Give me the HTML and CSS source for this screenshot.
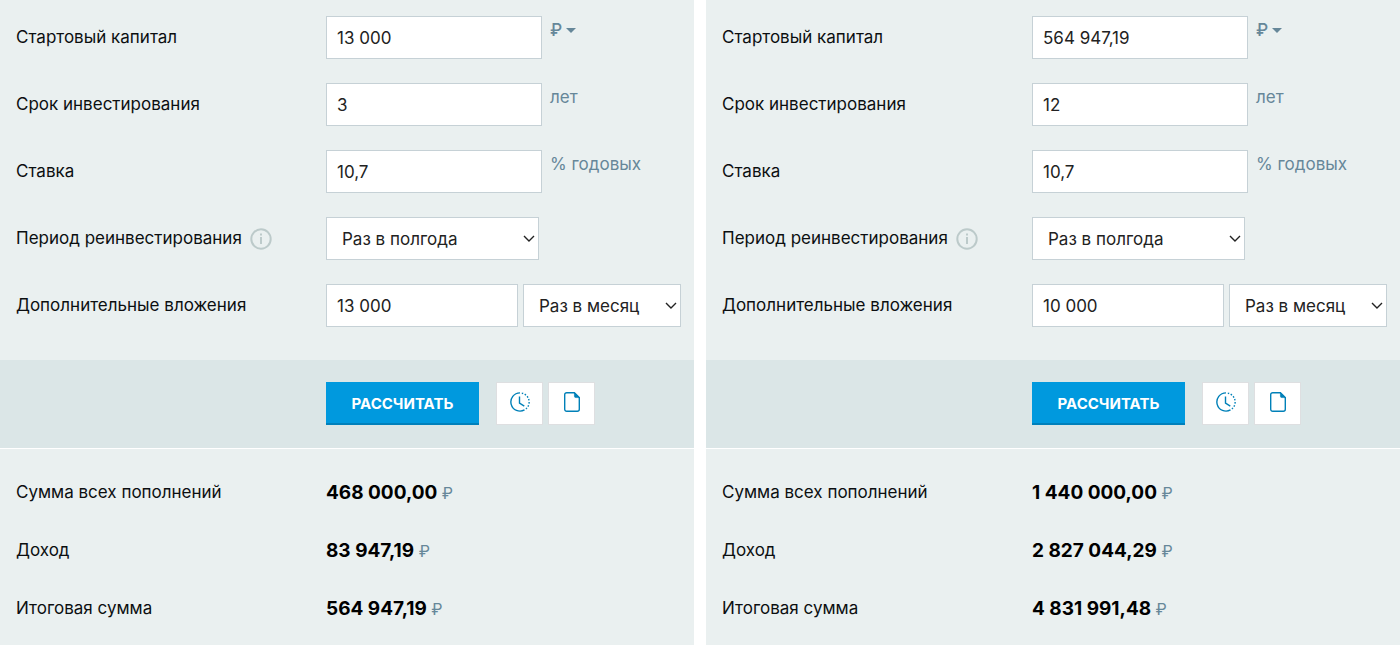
FILE: index.html
```html
<!DOCTYPE html>
<html lang="ru">
<head>
    <meta charset="UTF-8">
    <meta name="viewport" content="width=device-width, initial-scale=1.0">
    <title>Калькулятор инвестиций</title>
    <link rel="stylesheet" href="styles.css">
</head>
<body>
    <div class="container">
        <form class="calc">
            <div class="fields">
                <div class="row">
                    <label for="capital-1">Стартовый капитал</label>
                    <div class="control">
                        <input type="text" id="capital-1" value="13 000">
                        <button type="button" class="currency" aria-label="Валюта: ₽">₽<span class="caret"></span></button>
                    </div>
                </div>
                <div class="row">
                    <label for="term-1">Срок инвестирования</label>
                    <div class="control">
                        <input type="text" id="term-1" value="3">
                        <span class="unit">лет</span>
                    </div>
                </div>
                <div class="row">
                    <label for="rate-1">Ставка</label>
                    <div class="control">
                        <input type="text" id="rate-1" value="10,7">
                        <span class="unit">% годовых</span>
                    </div>
                </div>
                <div class="row">
                    <div class="label-info">
                        <label for="period-1">Период реинвестирования</label>
                        <svg class="info" viewBox="0 0 22 22" aria-hidden="true">
                            <circle cx="11" cy="11" r="9.7" fill="none" stroke="#bccaca" stroke-width="2"/>
                            <path d="M10 9h2v7h-2zM10 5.5h2v2h-2z" fill="#bccaca"/>
                        </svg>
                    </div>
                    <div class="control">
                        <select id="period-1" class="period">
                            <option>Раз в полгода</option>
                        </select>
                    </div>
                </div>
                <div class="row">
                    <label for="extra-1">Дополнительные вложения</label>
                    <div class="control control-pair">
                        <input type="text" id="extra-1" value="13 000">
                        <select class="frequency" aria-label="Частота вложений">
                            <option>Раз в месяц</option>
                        </select>
                    </div>
                </div>
            </div>

            <div class="actions">
                <button type="submit" class="submit">РАССЧИТАТЬ</button>
                <div class="tools">
                    <button type="button" class="tool" aria-label="История">
                        <svg viewBox="0 0 20 20" fill="none" stroke="#0080b8" stroke-width="1.4">
                            <path d="M10 .9a9.1 9.1 0 1 0 4.5 17"/>
                            <path d="M11.8 1.1A9.1 9.1 0 0 1 15.5 17.3" stroke-dasharray="1.5 1.6"/>
                            <path d="M9.5 4.6v6.6l4.8 2.9"/>
                        </svg>
                    </button>
                    <button type="button" class="tool" aria-label="Документ">
                        <svg viewBox="0 0 20 20" fill="none" stroke="#0080b8" stroke-width="1.4">
                            <path d="M12.4.7H4.7A2 2 0 0 0 2.7 2.7v14.6a2 2 0 0 0 2 2h10.6a2 2 0 0 0 2-2V5.6z"/>
                            <path d="M12.4.7v3.4a1.5 1.5 0 0 0 1.5 1.5h3.4z" fill="#0080b8" stroke-width=".6"/>
                        </svg>
                    </button>
                </div>
            </div>

            <dl class="results">
                <div class="result">
                    <dt>Сумма всех пополнений</dt>
                    <dd>468 000,00 <span>₽</span></dd>
                </div>
                <div class="result">
                    <dt>Доход</dt>
                    <dd>83 947,19 <span>₽</span></dd>
                </div>
                <div class="result">
                    <dt>Итоговая сумма</dt>
                    <dd>564 947,19 <span>₽</span></dd>
                </div>
            </dl>
        </form>

        <form class="calc">
            <div class="fields">
                <div class="row">
                    <label for="capital-2">Стартовый капитал</label>
                    <div class="control">
                        <input type="text" id="capital-2" value="564 947,19">
                        <button type="button" class="currency" aria-label="Валюта: ₽">₽<span class="caret"></span></button>
                    </div>
                </div>
                <div class="row">
                    <label for="term-2">Срок инвестирования</label>
                    <div class="control">
                        <input type="text" id="term-2" value="12">
                        <span class="unit">лет</span>
                    </div>
                </div>
                <div class="row">
                    <label for="rate-2">Ставка</label>
                    <div class="control">
                        <input type="text" id="rate-2" value="10,7">
                        <span class="unit">% годовых</span>
                    </div>
                </div>
                <div class="row">
                    <div class="label-info">
                        <label for="period-2">Период реинвестирования</label>
                        <svg class="info" viewBox="0 0 22 22" aria-hidden="true">
                            <circle cx="11" cy="11" r="9.7" fill="none" stroke="#bccaca" stroke-width="2"/>
                            <path d="M10 9h2v7h-2zM10 5.5h2v2h-2z" fill="#bccaca"/>
                        </svg>
                    </div>
                    <div class="control">
                        <select id="period-2" class="period">
                            <option>Раз в полгода</option>
                        </select>
                    </div>
                </div>
                <div class="row">
                    <label for="extra-2">Дополнительные вложения</label>
                    <div class="control control-pair">
                        <input type="text" id="extra-2" value="10 000">
                        <select class="frequency" aria-label="Частота вложений">
                            <option>Раз в месяц</option>
                        </select>
                    </div>
                </div>
            </div>

            <div class="actions">
                <button type="submit" class="submit">РАССЧИТАТЬ</button>
                <div class="tools">
                    <button type="button" class="tool" aria-label="История">
                        <svg viewBox="0 0 20 20" fill="none" stroke="#0080b8" stroke-width="1.4">
                            <path d="M10 .9a9.1 9.1 0 1 0 4.5 17"/>
                            <path d="M11.8 1.1A9.1 9.1 0 0 1 15.5 17.3" stroke-dasharray="1.5 1.6"/>
                            <path d="M9.5 4.6v6.6l4.8 2.9"/>
                        </svg>
                    </button>
                    <button type="button" class="tool" aria-label="Документ">
                        <svg viewBox="0 0 20 20" fill="none" stroke="#0080b8" stroke-width="1.4">
                            <path d="M12.4.7H4.7A2 2 0 0 0 2.7 2.7v14.6a2 2 0 0 0 2 2h10.6a2 2 0 0 0 2-2V5.6z"/>
                            <path d="M12.4.7v3.4a1.5 1.5 0 0 0 1.5 1.5h3.4z" fill="#0080b8" stroke-width=".6"/>
                        </svg>
                    </button>
                </div>
            </div>

            <dl class="results">
                <div class="result">
                    <dt>Сумма всех пополнений</dt>
                    <dd>1 440 000,00 <span>₽</span></dd>
                </div>
                <div class="result">
                    <dt>Доход</dt>
                    <dd>2 827 044,29 <span>₽</span></dd>
                </div>
                <div class="result">
                    <dt>Итоговая сумма</dt>
                    <dd>4 831 991,48 <span>₽</span></dd>
                </div>
            </dl>
        </form>
    </div>
</body>
</html>
```
FILE: styles.css
```css
* {
    box-sizing: border-box;
}
body {
    margin: 0;
    background: white;
    color: #0c0f10;
    font-family: Inter, sans-serif;
    font-size: 17px;
    line-height: 24px;
}
.container {
    display: grid;
    grid-template-columns: minmax(0, 1fr) minmax(0, 1fr);
    gap: 12px;
    min-height: 100vh;
}
.calc {
    background: #eaf0f0;
}
.fields {
    display: flex;
    flex-direction: column;
    gap: 24px;
    padding: 16px 13px 33px 16px;
}
.row, .result {
    display: grid;
    grid-template-columns: 310px minmax(0, 1fr);
    align-items: center;
}
.row label {
    padding-bottom: 1px;
}
.label-info {
    display: flex;
    align-items: center;
    gap: 8px;
}
.info {
    width: 22px;
    height: 22px;
}
.control {
    display: flex;
    align-items: flex-start;
    gap: 8px;
}
.control-pair {
    gap: 5px;
}
input, select {
    height: 43px;
    margin: 0;
    padding: 0 10px;
    border: 1px solid #c6d1d6;
    border-radius: 0;
    background: white;
    color: #222;
    font: inherit;
}
input {
    width: 216px;
}
select {
    padding: 0 30px 0 15px;
    appearance: none;
    background: white url("data:image/svg+xml,%3Csvg xmlns='http://www.w3.org/2000/svg' width='12' height='8' fill='none' stroke='%23222' stroke-width='1.4'%3E%3Cpath d='M1 1l5 5 5-5'/%3E%3C/svg%3E") no-repeat right 3px center;
}
.period {
    width: 213px;
}
.control-pair input {
    flex: 1;
    width: 0;
    min-width: 0;
}
.frequency {
    width: 158px;
}
.unit, .currency {
    padding: 2px 0 0;
    color: #668799;
}
.currency {
    display: flex;
    align-items: center;
    gap: 4px;
    border: none;
    background: none;
    font: inherit;
    font-weight: 500;
    cursor: pointer;
}
.caret {
    border: 5px solid transparent;
    border-top-color: #668799;
    border-bottom: none;
}
.actions {
    display: flex;
    gap: 17px;
    padding: 22px 13px 23px 326px;
    border-bottom: 1px solid white;
    background: #dbe6e7;
}
.submit {
    width: 153px;
    height: 43px;
    padding: 3px 0 0;
    border: none;
    border-bottom: 2px solid #0080bb;
    background: #0099de;
    color: white;
    font: bold 15px/24px Inter, sans-serif;
    cursor: pointer;
}
.tools {
    display: flex;
    gap: 5px;
}
.tool {
    width: 47px;
    height: 43px;
    padding: 0 0 3px;
    border: 1px solid #dedfe1;
    background: white;
    cursor: pointer;
}
.tool svg {
    display: block;
    width: 20px;
    height: 20px;
    margin: 0 auto;
}
.results {
    margin: 0;
    padding: 14px 13px 0 16px;
}
.result {
    min-height: 58px;
}
dd {
    margin: 0;
    padding-top: 2px;
    color: black;
    font-size: 19px;
    font-weight: bold;
}
dd span {
    color: #668799;
    font-size: 16px;
    font-weight: normal;
}

@media (max-width: 1200px) {
    .container {
        grid-template-columns: 1fr;
    }
}
```
